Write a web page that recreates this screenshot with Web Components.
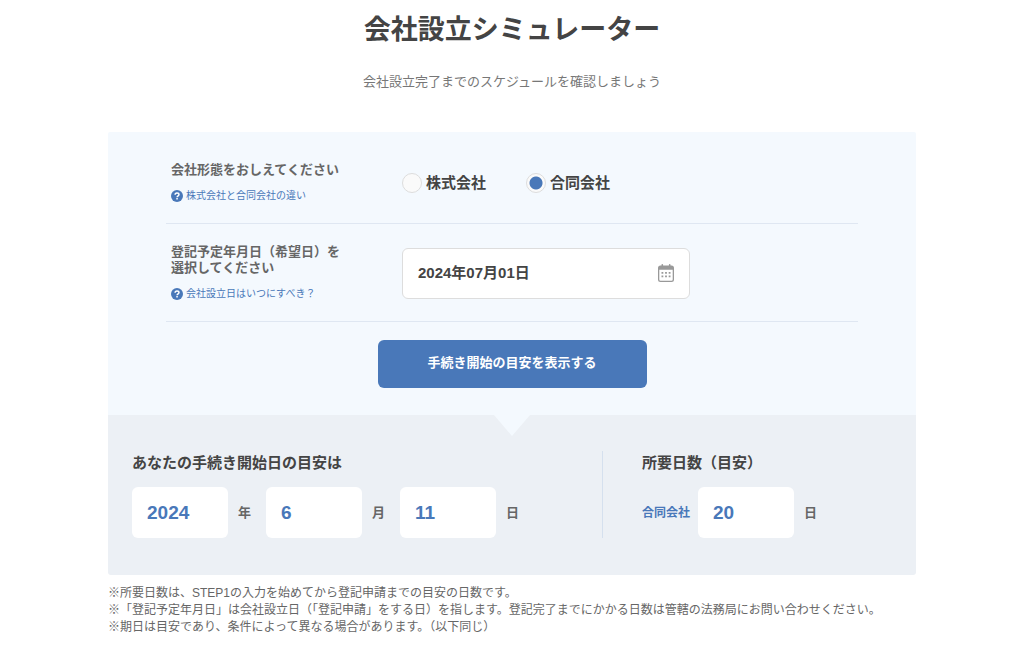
<!DOCTYPE html>
<html lang="ja">
<head>
<meta charset="utf-8">
<meta name="viewport" content="width=device-width, initial-scale=1">
<title>会社設立シミュレーター</title>
<style>
  body {
    margin: 0;
    background: #fff;
    color: #666;
    font-family: "Liberation Sans", "Noto Sans CJK JP", sans-serif;
    font-size: 13px;
    line-height: 16px;
    --blue: #4978b9;
    --ink: #444;
    --line: #dfe7f2;
    --panel: #f4f9fe;
  }
</style>
</head>
<body>
<company-simulator></company-simulator>

<script>
function define(name, html, setup) {
  const template = document.createElement('template');
  template.innerHTML = html;
  customElements.define(name, class extends HTMLElement {
    constructor() {
      super();
      this.attachShadow({ mode: 'open' }).append(template.content.cloneNode(true));
    }
    connectedCallback() {
      if (setup) setup(this, this.shadowRoot);
    }
  });
}

/* Help link with a round question mark */
define('help-link', `
  <style>
    :host { display: block; }
    a { display: flex; align-items: center; gap: 3px; color: var(--blue); font-size: 10px; line-height: 16px; text-decoration: none; }
    a:hover { text-decoration: underline; }
    svg { flex: none; }
  </style>
  <a href="#">
    <svg width="12" height="12" viewBox="0 0 12 12" aria-hidden="true">
      <circle cx="6" cy="6" r="6" fill="#4978b9"/>
      <path d="M4.1 4.7C4.1 3.5 4.9 2.9 6 2.9s2 .7 2 1.7C8 5.8 6.1 5.8 6.1 7.2" fill="none" stroke="#fff" stroke-width="1.5"/>
      <rect x="5.3" y="8" width="1.5" height="1.5" fill="#fff"/>
    </svg>
    <slot></slot>
  </a>`);

/* One question: title and help on the left, control on the right */
define('form-row', `
  <style>
    :host { display: grid; grid-template-columns: 231px 1fr; align-items: center; padding: 20px 5px 19px; border-bottom: 1px solid var(--line); }
    .head { display: grid; gap: 10px; font-size: 13px; line-height: 16px; font-weight: bold; }
    ::slotted([slot="help"]) { font-weight: normal; }
  </style>
  <div class="head"><slot name="title"></slot><slot name="help"></slot></div>
  <slot></slot>`);

/* Company type choice */
define('company-type', `
  <style>
    :host { display: flex; gap: 40px; color: var(--ink); font-size: 15px; line-height: 20px; font-weight: bold; }
    label { display: flex; align-items: center; gap: 4px; }
    input { appearance: none; box-sizing: border-box; width: 20px; height: 20px; margin: 0; border: 1px solid #ddd; border-radius: 50%; background: #fafafa; }
    input:checked { background: radial-gradient(circle, var(--blue) 6px, #fafafa 7px); }
  </style>
  <label><input type="radio" name="type" value="kk">株式会社</label>
  <label><input type="radio" name="type" value="gk" checked>合同会社</label>`);

/* Frame of the date field with its calendar icon */
define('date-box', `
  <style>
    :host { display: flex; align-items: center; box-sizing: border-box; width: 288px; max-width: 100%; height: 51px; padding: 0 15px; border: 1px solid #ddd; border-radius: 6px; background: #fff; }
    ::slotted(input) { flex: 1; min-width: 0; padding: 0; border: 0; outline: 0; background: none; color: var(--ink); font: bold 15px/20px "Liberation Sans", "Noto Sans CJK JP", sans-serif; }
  </style>
  <slot></slot>
  <svg width="16" height="18" viewBox="0 0 16 18" fill="#999" aria-hidden="true">
    <path fill-rule="evenodd" d="M2.5 1.5h1V.8a.8.8 0 0 1 1.6 0v.7h5.8V.8a.8.8 0 0 1 1.6 0v.7h1A2.5 2.5 0 0 1 16 4v11.500A2.500 2.500 0 0 1 13.500 18h-11A2.500 2.500 0 0 1 0 15.500V4a2.500 2.500 0 0 1 2.500-2.500zM1.300 5.800v9.700q0 1.200 1.200 1.200h11q1.200 0 1.200-1.200V5.800z"/>
    <path d="M3.500 8h1.800v1.800H3.500zM7.100 8h1.800v1.800H7.100zM10.700 8h1.800v1.800h-1.800zM3.500 11.500h1.800v1.800H3.500zM7.100 11.500h1.800v1.800H7.100zM10.700 11.500h1.800v1.800h-1.800z"/>
  </svg>`);

/* Result value followed by its unit */
define('value-box', `
  <style>
    :host { display: flex; align-items: center; gap: 10px; font-size: 13px; font-weight: bold; }
    input { box-sizing: border-box; width: 96px; height: 51px; padding: 0 15px; border: 0; border-radius: 6px; background: #fff; color: var(--blue); font: bold 19px/24px "Liberation Sans", "Noto Sans CJK JP", sans-serif; }
  </style>
  <input id="v" type="text" readonly><label for="v"><slot></slot></label>`,
  (host, root) => { root.querySelector('input').value = host.getAttribute('value'); });

/* Titled group of result values */
define('result-group', `
  <style>
    :host { display: block; }
    h2 { margin: 0 0 12px; color: var(--ink); font-size: 15px; line-height: 24px; font-weight: bold; }
    div { display: flex; align-items: center; gap: 15px; }
    ::slotted(b) { color: var(--blue); font-size: 12px; margin-right: -7px; }
  </style>
  <h2></h2><div><slot></slot></div>`,
  (host, root) => { root.querySelector('h2').textContent = host.getAttribute('heading'); });

define('company-simulator', `
  <style>
    :host { display: block; max-width: 808px; margin: 0 auto; padding: 10px 24px 24px; }
    header { text-align: center; }
    h1 { margin: 0; color: var(--ink); font-size: 27px; line-height: 40px; }
    header p { margin: 22px 0 40px; font-size: 13px; line-height: 20px; color: #777; }
    form { padding: 10px 58px 27px; background: var(--panel); border-radius: 2px 2px 0 0; }
    button { display: block; width: 269px; height: 48px; margin: 18px auto 0; padding: 0 0 2px; border: 0; border-radius: 6px; background: var(--blue); color: #fff; font: bold 13px/20px "Liberation Sans", "Noto Sans CJK JP", sans-serif; }
    .results { position: relative; display: grid; grid-template-columns: 470px 1fr; padding: 36px 24px 37px; background: #ecf0f5; border-radius: 0 0 3px 3px; }
    .results::before { content: ""; position: absolute; top: 0; left: calc(50% - 18px); width: 36px; height: 21px; background: var(--panel); clip-path: polygon(0 0, 100% 0, 50% 100%); }
    .days { padding-left: 39px; border-left: 1px solid #d5e0ee; }
    .notes { margin: 10px 0 0; padding: 0; list-style: none; font-size: 12px; line-height: 17px; }
    @media (max-width: 820px) {
      .results { grid-template-columns: 1fr; gap: 24px; }
      .days { padding-left: 0; border-left: 0; }
      form { padding-left: 16px; padding-right: 16px; }
    }
  </style>
  <header>
    <h1>会社設立シミュレーター</h1>
    <p>会社設立完了までのスケジュールを確認しましょう</p>
  </header>
  <form>
    <form-row>
      <span slot="title" id="type-title">会社形態をおしえてください</span>
      <help-link slot="help">株式会社と合同会社の違い</help-link>
      <company-type role="radiogroup" aria-labelledby="type-title"></company-type>
    </form-row>
    <form-row>
      <label slot="title" for="date">登記予定年月日（希望日）を<br>選択してください</label>
      <help-link slot="help">会社設立日はいつにすべき？</help-link>
      <date-box><input id="date" type="text" value="2024年07月01日"></date-box>
    </form-row>
    <button type="button">手続き開始の目安を表示する</button>
  </form>
  <section class="results">
    <result-group heading="あなたの手続き開始日の目安は">
      <value-box value="2024">年</value-box>
      <value-box value="6">月</value-box>
      <value-box value="11">日</value-box>
    </result-group>
    <result-group class="days" heading="所要日数（目安）">
      <b>合同会社</b>
      <value-box value="20">日</value-box>
    </result-group>
  </section>
  <ul class="notes">
    <li>※所要日数は、STEP1の入力を始めてから登記申請までの目安の日数です。</li>
    <li>※「登記予定年月日」は会社設立日（「登記申請」をする日）を指します。登記完了までにかかる日数は管轄の法務局にお問い合わせください。</li>
    <li>※期日は目安であり、条件によって異なる場合があります。（以下同じ）</li>
  </ul>`);
</script>
</body>
</html>
